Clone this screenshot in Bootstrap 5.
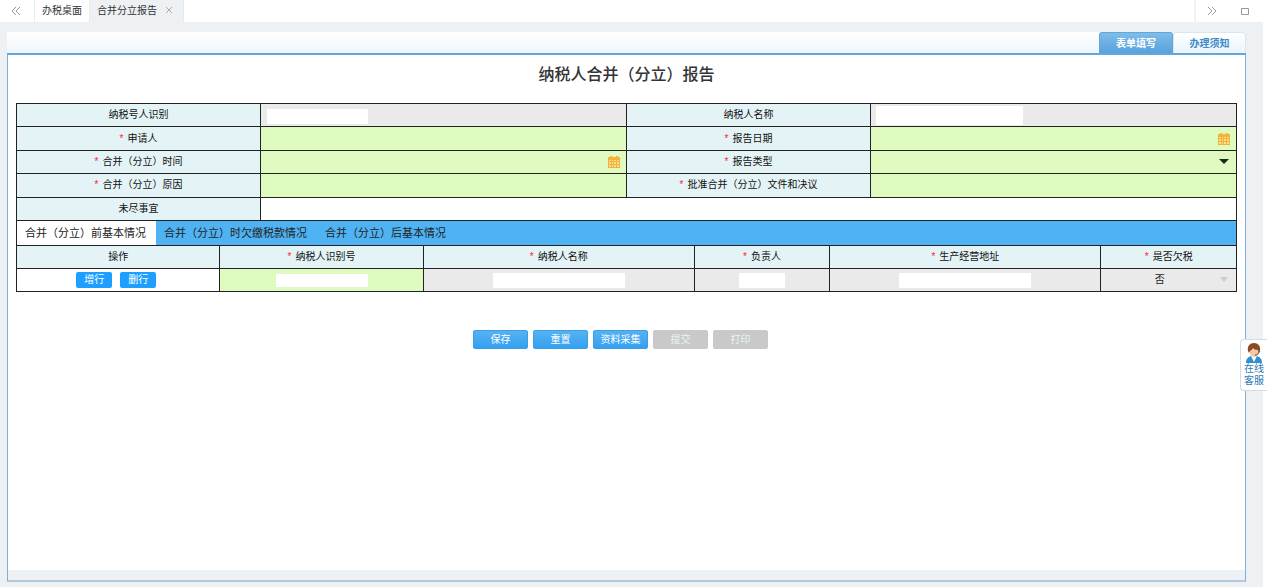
<!DOCTYPE html>
<html lang="zh-CN">
<head>
<meta charset="utf-8">
<meta name="viewport" content="width=device-width, initial-scale=1">
<title>纳税人合并（分立）报告</title>
<link href="https://cdn.jsdelivr.net/npm/bootstrap@5.3.0/dist/css/bootstrap.min.css" rel="stylesheet">
<style>
  body { font-family: "Liberation Sans", "Noto Sans CJK SC", sans-serif; font-size: 10px; line-height: 14px; color: #222; background: #fff; }
  button, input, select { font: inherit; color: inherit; }
  .page-shell { background: #edf1f4; margin-right: 4px; }
  .window-bar { height: 22px; background: #fff; color: #333; }
  .window-bar .bar-btn { width: 34px; border: 0; background: none; color: #999; padding: 0 2px 0 0; }
  .window-tab { padding: 0 7px; border-left: 1px solid #e9ecef; color: #333; text-decoration: none; }
  .window-tab.active { background: #edf1f4; border-right: 1px solid #e6e9ec; padding-right: 10px; }
  .tab-close { border: 0; background: none; padding: 0 0 2px; margin-left: 8px; line-height: 0; color: #aaa; }
  .window-end { border-left: 2px solid #f0f2f4; width: 69px; }
  .report-area { margin: 10px 17px 5px 7px; }
  .view-tabs { height: 23px; background: linear-gradient(#fff, #eef6fb); border-bottom: 2px solid #62a7d9; }
  .view-tab { width: 73px; border-radius: 3px 3px 0 0; font-weight: 700; color: #3d8cc7; text-decoration: none; border: 1px solid #d9e6ee; border-bottom: 0; background: linear-gradient(#fff, #eaf4fb); padding-top: 2px; }
  .view-tab.active { width: 74px; color: #fff; background: linear-gradient(#7fbcea, #58a2dc); border-color: #62a7d9; }
  .report-body { border: 1px solid #7fb0d8; border-top: 0; border-bottom: 2px solid #b0c9dc; background: #fff; }
  .report-main { padding: 8px; }
  .report-foot { height: 10px; background: #edf1f5; }
  h1 { font-size: 16px; line-height: 24px; font-weight: 500; color: #333; margin: 0 0 16px; text-align: center; }
  .form-grid { width: 100%; table-layout: fixed; border-collapse: collapse; margin: 0; }
  .form-grid th, .form-grid td { border: 1px solid #222; padding: 0; height: 23px; position: relative; vertical-align: middle; }
  .form-grid th { background: #e4f3f5; font-weight: 400; text-align: center; color: #111; }
  .summary-grid { height: 118px; }
  .form-grid .editable { background: #defabf; }
  .form-grid .locked { background: #eaeaea; }
  .req::before { content: "*"; color: #f23; margin-right: 4px; }
  .cell-field { display: block; width: 100%; height: 20px; border: 0; outline: 0; background: transparent; padding: 0 6px; appearance: none; }
  .cell-field:disabled { opacity: 1; color: #222; }
  .masked { display: block; border: 0; background: #fff; height: 15px; padding: 0; }
  .masked-id { width: 101px; margin: 2px 0 0 6px; }
  .masked-name { width: 147px; height: 19px; margin-left: 5px; }
  .w-narrow { width: 46px; }
  .w-mid { width: 92px; height: 13px; }
  .w-wide { width: 132px; }
  .cell-icon { position: absolute; right: 6px; top: 50%; transform: translateY(-50%); pointer-events: none; }
  .detail-tabs { background: #4fb3f3; border: 1px solid #222; border-top: 0; border-bottom: 0; height: 24px; font-size: 11px; }
  .detail-tabs button { border: 0; background: none; padding: 0 10px 0 8px; color: #222; }
  .detail-tabs button.active { background: #fff; }
  .row-btn { width: 36px; height: 16px; line-height: 14px; border: 0; border-radius: 2px; background: #1e9fff; color: #fff; padding: 0; }
  .actions { gap: 5px; margin: 38px 12px 0 0; }
  .act-btn { width: 55px; height: 19px; border: 1px solid #3a9fe6; border-radius: 2px; padding: 0; color: #fff; background: linear-gradient(#55b2f1, #35a0f1); }
  .act-btn:disabled { background: #c9c9c9; border-color: #c9c9c9; color: #e6f6f3; }
  .service { position: fixed; right: 0; top: 339px; width: 27px; height: 52px; background: #fff; border: 1px solid #cfdde8; border-right: 0; border-radius: 4px 0 0 4px; color: #2b78b8; text-decoration: none; line-height: 12px; padding-top: 3px; }
</style>
</head>
<body>
<div class="page-shell d-flex flex-column min-vh-100">
  <nav class="window-bar d-flex align-items-stretch">
    <button class="bar-btn" type="button" aria-label="向左">
      <svg width="10" height="10" viewBox="0 0 10 10" fill="none" stroke="currentColor"><path d="M5 1 1 5l4 4M9 1 5 5l4 4"/></svg>
    </button>
    <a class="window-tab d-flex align-items-center" href="#">办税桌面</a>
    <div class="window-tab active d-flex align-items-center">
      <a class="text-reset text-decoration-none" href="#">合并分立报告</a>
      <button class="tab-close" type="button" aria-label="关闭">
        <svg width="8" height="8" viewBox="0 0 8 8" fill="none" stroke="currentColor"><path d="m1 1 6 6M7 1 1 7"/></svg>
      </button>
    </div>
    <div class="window-end d-flex ms-auto">
      <button class="bar-btn" type="button" aria-label="向右">
        <svg width="10" height="10" viewBox="0 0 10 10" fill="none" stroke="currentColor"><path d="m1 1 4 4-4 4M5 1l4 4-4 4"/></svg>
      </button>
      <button class="bar-btn" type="button" aria-label="最大化">
        <svg width="8" height="8" viewBox="0 0 8 8" fill="none" stroke="currentColor"><path d="M.5 1.500h7v6h-7z"/></svg>
      </button>
    </div>
  </nav>

  <main class="report-area d-flex flex-column flex-grow-1">
    <div class="view-tabs d-flex justify-content-end">
      <a class="view-tab active d-flex align-items-center justify-content-center" href="#">表单填写</a>
      <a class="view-tab d-flex align-items-center justify-content-center" href="#">办理须知</a>
    </div>
    <div class="report-body d-flex flex-column flex-grow-1">
      <div class="report-main flex-grow-1">
        <h1>纳税人合并（分立）报告</h1>
        <table class="form-grid summary-grid">
          <colgroup><col style="width:20%"><col style="width:30%"><col style="width:20%"><col style="width:30%"></colgroup>
          <tbody>
            <tr>
              <th scope="row"><label for="taxId">纳税号人识别</label></th>
              <td class="locked"><input class="masked masked-id" id="taxId" readonly></td>
              <th scope="row"><label for="taxName">纳税人名称</label></th>
              <td class="locked"><input class="masked masked-name" id="taxName" readonly></td>
            </tr>
            <tr>
              <th scope="row"><label class="req" for="applicant">申请人</label></th>
              <td class="editable"><input class="cell-field" id="applicant"></td>
              <th scope="row"><label class="req" for="reportDate">报告日期</label></th>
              <td class="editable"><input class="cell-field" id="reportDate">
                <svg class="cell-icon" width="12" height="12" viewBox="0 0 12 12"><path fill="#f3b23c" d="M0 1h2V0h2v1h4V0h2v1h2v11H0z"/><path fill="#fde08a" d="M1 4h2v1H1zm3 0h1v1H4zm2 0h2v1H6zm3 0h2v1H9zM1 6h2v2H1zm3 0h1v2H4zm2 0h2v2H6zm3 0h2v2H9zM1 9h2v2H1zm3 0h1v2H4zm2 0h2v2H6zm3 0h2v2H9z"/></svg>
              </td>
            </tr>
            <tr>
              <th scope="row"><label class="req" for="mergeTime">合并（分立）时间</label></th>
              <td class="editable"><input class="cell-field" id="mergeTime">
                <svg class="cell-icon" width="12" height="12" viewBox="0 0 12 12"><path fill="#f3b23c" d="M0 1h2V0h2v1h4V0h2v1h2v11H0z"/><path fill="#fde08a" d="M1 4h2v1H1zm3 0h1v1H4zm2 0h2v1H6zm3 0h2v1H9zM1 6h2v2H1zm3 0h1v2H4zm2 0h2v2H6zm3 0h2v2H9zM1 9h2v2H1zm3 0h1v2H4zm2 0h2v2H6zm3 0h2v2H9z"/></svg>
              </td>
              <th scope="row"><label class="req" for="reportType">报告类型</label></th>
              <td class="editable"><select class="cell-field" id="reportType"><option></option></select>
                <svg class="cell-icon" width="12" height="6" viewBox="0 0 12 6"><path fill="#222" d="M1 0h10L6 5z"/></svg>
              </td>
            </tr>
            <tr>
              <th scope="row"><label class="req" for="mergeReason">合并（分立）原因</label></th>
              <td class="editable"><input class="cell-field" id="mergeReason"></td>
              <th scope="row"><label class="req" for="approval">批准合并（分立）文件和决议</label></th>
              <td class="editable"><input class="cell-field" id="approval"></td>
            </tr>
            <tr>
              <th scope="row"><label for="pending">未尽事宜</label></th>
              <td colspan="3"><input class="cell-field" id="pending"></td>
            </tr>
          </tbody>
        </table>

        <div class="detail-tabs d-flex align-items-stretch">
          <button class="active" type="button">合并（分立）前基本情况</button>
          <button type="button">合并（分立）时欠缴税款情况</button>
          <button type="button">合并（分立）后基本情况</button>
        </div>

        <table class="form-grid">
          <colgroup><col style="width:16.67%"><col style="width:16.67%"><col style="width:22.22%"><col style="width:11.11%"><col style="width:22.22%"><col style="width:11.11%"></colgroup>
          <thead>
            <tr>
              <th scope="col">操作</th>
              <th scope="col" class="req">纳税人识别号</th>
              <th scope="col" class="req">纳税人名称</th>
              <th scope="col" class="req">负责人</th>
              <th scope="col" class="req">生产经营地址</th>
              <th scope="col" class="req">是否欠税</th>
            </tr>
          </thead>
          <tbody>
            <tr>
              <td><div class="d-flex justify-content-center gap-2 pe-1">
                <button class="row-btn" type="button">增行</button>
                <button class="row-btn" type="button">删行</button>
              </div></td>
              <td class="editable"><input class="masked w-mid mx-auto" aria-label="纳税人识别号"></td>
              <td class="locked"><input class="masked w-wide mx-auto" aria-label="纳税人名称" readonly></td>
              <td class="locked"><input class="masked w-narrow mx-auto" aria-label="负责人" readonly></td>
              <td class="locked"><input class="masked w-wide mx-auto" aria-label="生产经营地址" readonly></td>
              <td class="locked"><select class="cell-field text-center pe-4" aria-label="是否欠税" disabled><option>否</option></select>
                <svg class="cell-icon" width="12" height="6" viewBox="0 0 12 6"><path fill="#ccc" d="M2 0h8L6 5z"/></svg>
              </td>
            </tr>
          </tbody>
        </table>

        <div class="actions d-flex justify-content-center">
          <button class="act-btn" type="button">保存</button>
          <button class="act-btn" type="button">重置</button>
          <button class="act-btn" type="button">资料采集</button>
          <button class="act-btn" type="button" disabled>提交</button>
          <button class="act-btn" type="button" disabled>打印</button>
        </div>
      </div>
      <div class="report-foot"></div>
    </div>
  </main>
</div>

<a class="service d-flex flex-column align-items-center" href="#">
  <svg width="18" height="20" viewBox="0 0 18 20" class="flex-shrink-0">
    <path fill="#2f8fd0" d="M1 20c0-4 2-6 5-7l3 3 3-3c3 1 5 3 5 7z"/>
    <path fill="#fff" d="m6 13 3 6 3-6-3 2z"/>
    <path fill="#f5c9a4" d="M5 5h8v5c0 3-2 4-4 4s-4-1-4-4z"/>
    <path fill="#8a4a26" d="M3 8C2 3 5 0 9 0s7 3 6 8l-1 2-1-3c-3 0-4-1-5-2-1 2-2 2-3 3l-1 2z"/>
    <path fill="none" stroke="#444" d="M14 8c0 3-2 4-4 4"/>
  </svg>
  <span>在线</span><span>客服</span>
</a>
<script src="https://cdn.jsdelivr.net/npm/bootstrap@5.3.0/dist/js/bootstrap.bundle.min.js"></script>
</body>
</html>
